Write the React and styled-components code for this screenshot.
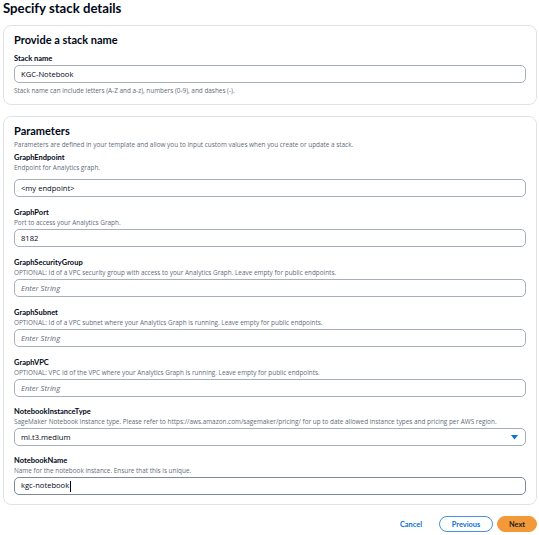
import React from "react";
import styled, { createGlobalStyle } from "styled-components";

const Global = createGlobalStyle`
  html, body { margin: 0; padding: 0; background: #ffffff; }
  body { font-family: "Open Sans", "Noto Sans", sans-serif; color: #000716; }
`;

const bold = `"Lato", "Open Sans", sans-serif`;

const Page = styled.div`
  width: 539px;
  box-sizing: border-box;
  padding: 0 2px 0 3px;
`;

const Title = styled.h1`
  margin: 0;
  font-family: ${bold};
  font-size: 13.2px;
  line-height: 17px;
  font-weight: 700;
  height: 25px;
`;

const Card = styled.section`
  box-sizing: border-box;
  border: 1px solid #dfe3e8;
  border-radius: 8px;
  padding: 6px 10px ${(p) => p.$pb}px 10px;
  margin-bottom: ${(p) => p.$mb || 0}px;
  display: flex;
  flex-direction: column;
`;

const CardTitle = styled.h2`
  margin: 0;
  font-family: ${bold};
  font-size: 11px;
  line-height: 16px;
  font-weight: 700;
`;

const CardDesc = styled.p`
  margin: 1px 0 0;
  font-size: 6.4px;
  line-height: 9px;
  color: #5f6b7a;
`;

const Field = styled.div`
  display: flex;
  flex-direction: column;
  margin-top: ${(p) => p.$mt}px;
`;

const Label = styled.div`
  font-family: ${bold};
  font-size: 7.5px;
  line-height: 10px;
  font-weight: 700;
`;

const Desc = styled.div`
  font-size: 6.4px;
  line-height: 9px;
  color: #5f6b7a;
  margin-bottom: ${(p) => p.$mb}px;
`;

const Help = styled.div`
  font-size: 6.4px;
  line-height: 9px;
  color: #5f6b7a;
  margin-top: 3px;
`;

const Box = styled.div`
  box-sizing: border-box;
  height: 18px;
  margin-top: ${(p) => p.$mt || 0}px;
  border: 1px solid ${(p) => (p.$focus ? "#7d8998" : "#a6afbb")};
  border-radius: 5px;
  padding: 0 7px 0 6px;
  display: flex;
  align-items: center;
  justify-content: space-between;
  font-size: 7.6px;
  color: ${(p) => (p.$placeholder ? "#5f6b7a" : "#000716")};
  font-style: ${(p) => (p.$placeholder ? "italic" : "normal")};
`;

const Caret = styled.span`
  display: inline-block;
  width: 1px;
  height: 11px;
  background: #000716;
  vertical-align: middle;
  margin-left: 0.5px;
`;

const Footer = styled.div`
  display: flex;
  justify-content: flex-end;
  align-items: center;
  margin-top: 11px;
  gap: 4px;
`;

const LinkButton = styled.button`
  border: none;
  background: none;
  font-family: ${bold};
  font-weight: 700;
  font-size: 7.4px;
  color: #0972d3;
  padding: 0;
  margin-right: 13px;
  height: 16px;
`;

const PillButton = styled.button`
  box-sizing: border-box;
  height: 16px;
  border-radius: 9px;
  font-family: ${bold};
  font-weight: 700;
  font-size: 7.4px;
  padding: 0;
  width: ${(p) => p.$w}px;
  border: 1px solid ${(p) => (p.$primary ? "#f3993a" : "#4593e0")};
  background: ${(p) => (p.$primary ? "#f3993a" : "#ffffff")};
  color: ${(p) => (p.$primary ? "#1a1d23" : "#0972d3")};
`;

const Arrow = () => (
  <svg width="7" height="5" viewBox="0 0 7 5">
    <path d="M0 0 H7 L3.5 4.5 Z" fill="#0972d3" />
  </svg>
);

const params = [
  { label: "GraphEndpoint", desc: "Endpoint for Analytics graph.", value: "<my endpoint>", mt: 4, dmb: 7 },
  { label: "GraphPort", desc: "Port to access your Analytics Graph.", value: "8182", mt: 11, dmb: 2 },
  {
    label: "GraphSecurityGroup",
    desc: "OPTIONAL: Id of a VPC security group with access to your Analytics Graph. Leave empty for public endpoints.",
    placeholder: "Enter String",
    mt: 11,
    dmb: 2,
  },
  {
    label: "GraphSubnet",
    desc: "OPTIONAL: Id of a VPC subnet where your Analytics Graph is running. Leave empty for public endpoints.",
    placeholder: "Enter String",
    mt: 11,
    dmb: 2,
  },
  {
    label: "GraphVPC",
    desc: "OPTIONAL: VPC Id of the VPC where your Analytics Graph is running. Leave empty for public endpoints.",
    placeholder: "Enter String",
    mt: 11,
    dmb: 2,
  },
  {
    label: "NotebookInstanceType",
    desc: "SageMaker Notebook instance type. Please refer to https://aws.amazon.com/sagemaker/pricing/ for up to date allowed instance types and pricing per AWS region.",
    value: "ml.t3.medium",
    select: true,
    mt: 10,
    dmb: 2,
  },
  {
    label: "NotebookName",
    desc: "Name for the notebook instance. Ensure that this is unique.",
    value: "kgc-notebook",
    caret: true,
    mt: 10,
    dmb: 2,
  },
];

export default function App() {
  return (
    <Page>
      <Global />
      <Title>Specify stack details</Title>
      <Card $mb={11} $pb={9}>
        <CardTitle>Provide a stack name</CardTitle>
        <Field $mt={6}>
          <Label>Stack name</Label>
          <Box $mt={1}>KGC-Notebook</Box>
          <Help>Stack name can include letters (A-Z and a-z), numbers (0-9), and dashes (-).</Help>
        </Field>
      </Card>
      <Card $pb={9}>
        <CardTitle>Parameters</CardTitle>
        <CardDesc>
          Parameters are defined in your template and allow you to input custom values when you create or update a stack.
        </CardDesc>
        {params.map((f) => (
          <Field key={f.label} $mt={f.mt}>
            <Label>{f.label}</Label>
            <Desc $mb={f.dmb}>{f.desc}</Desc>
            <Box $placeholder={!!f.placeholder} $focus={f.caret}>
              <span>
                {f.placeholder || f.value}
                {f.caret && <Caret />}
              </span>
              {f.select && <Arrow />}
            </Box>
          </Field>
        ))}
      </Card>
      <Footer>
        <LinkButton>Cancel</LinkButton>
        <PillButton $w={54}>Previous</PillButton>
        <PillButton $primary $w={40}>Next</PillButton>
      </Footer>
    </Page>
  );
}
